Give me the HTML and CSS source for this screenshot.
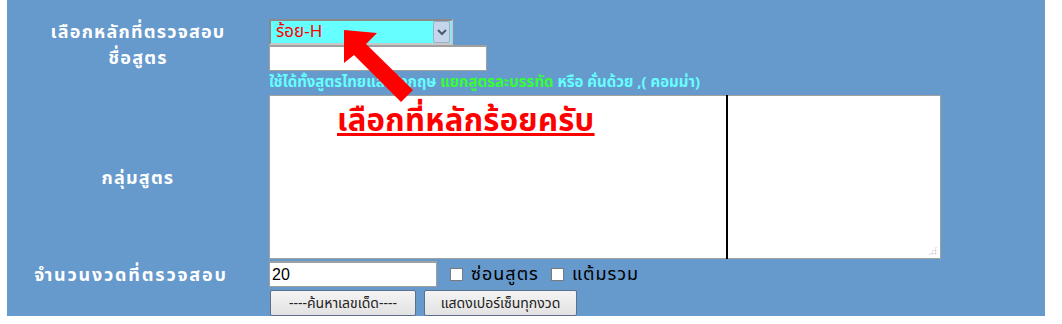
FILE: index.html
```html
<!DOCTYPE html>
<html lang="th">
<head>
<meta charset="utf-8">
<link rel="stylesheet" href="styles.css">
</head>
<body>
<div class="panel">
  <div class="form">
    <div class="label r1">เลือกหลักที่ตรวจสอบ</div>
    <div class="field r1">
      <div class="select"><span class="select-text">ร้อย-H</span><span class="select-btn"><svg width="12" height="8" viewBox="0 0 12 8"><path d="M2 2 L6 6 L10 2" fill="none" stroke="#4a5a70" stroke-width="2"/></svg></span></div>
    </div>
    <div class="label r2">ชื่อสูตร</div>
    <div class="field r2"><div class="input name"></div></div>
    <div class="field r3"><div class="hint">ใช้ได้ทั้งสูตรไทยและอังกฤษ <span class="green">แยกสูตรละบรรทัด</span> หรือ คั่นด้วย ,( คอมม่า)</div></div>
    <div class="label r4">กลุ่มสูตร</div>
    <div class="field r4"><div class="textarea"><span class="grip"></span></div></div>
    <div class="label r5 wide">จำนวนงวดที่ตรวจสอบ</div>
    <div class="field r5 inline">
      <div class="input count">20</div>
      <span class="check"></span><span class="check-label">ซ่อนสูตร</span>
      <span class="check"></span><span class="check-label">แต้มรวม</span>
    </div>
    <div class="field r6 inline buttons">
      <div class="btn b1">----ค้นหาเลขเด็ด----</div>
      <div class="btn b2">แสดงเปอร์เซ็นทุกงวด</div>
    </div>
  </div>
  <svg class="arrow" width="90" height="90" viewBox="0 0 90 90">
    <polygon points="7,0 40,3 29,14 76,60 64,72 17,25 7,33" fill="#ff0000"/>
  </svg>
  <div class="vline"></div>
  <div class="callout">เลือกที่หลักร้อยครับ</div>
</div>
</body>
</html>
```
FILE: styles.css
```css
html, body { margin: 0; padding: 0; background: #ffffff; }
body { font-family: Tahoma, "Noto Sans Thai", "Noto Sans", "DejaVu Sans", sans-serif; }
.panel {
  position: relative;
  margin-left: 7px;
  width: 1038px;
  height: 316px;
  background: #6699cc;
  box-sizing: border-box;
  padding-top: 19px;
}
.form {
  display: grid;
  grid-template-columns: 262px 1fr;
  grid-template-rows: 26px 26px 24px 166px 28px 27px;
}
.label {
  grid-column: 1;
  color: #ffffff;
  font-weight: bold;
  font-size: 18px;
  letter-spacing: 1.2px;
  display: flex;
  align-items: center;
  justify-content: center;
  white-space: nowrap;
}
.label.wide { letter-spacing: 1.8px; padding-right: 14px; }
.field { grid-column: 2; }
.r1 { grid-row: 1; }
.r2 { grid-row: 2; }
.r3 { grid-row: 3; }
.r4 { grid-row: 4; }
.r5 { grid-row: 5; }
.r6 { grid-row: 6; }
.label.r1 { align-items: flex-start; padding-top: 0px; }
.label.r2 { align-items: flex-start; padding-top: 0px; }
.select {
  width: 184px;
  height: 26px;
  box-sizing: border-box;
  border: 2px solid #8a8a8a;
  border-right-color: #c8c8c8;
  border-bottom-color: #c8c8c8;
  background: #66ffff;
  display: flex;
  align-items: center;
  justify-content: space-between;
}
.select-text { color: #ff0000; font-size: 17px; padding-left: 5px; }
.select-btn {
  width: 15px;
  height: 20px;
  margin-right: 1px;
  background: #c6d6ea;
  border: 1px solid #9aaec8;
  border-radius: 2px;
  display: flex;
  align-items: center;
  justify-content: center;
}
.input {
  box-sizing: border-box;
  background: #ffffff;
  border: 1px solid #a0a0a0;
  border-top: 2px solid #a0a0a0;
  height: 26px;
  font-family: Arial, "Liberation Sans", sans-serif;
  font-size: 16px;
  color: #000;
  padding-left: 2px;
  display: flex;
  align-items: center;
}
.input.name { width: 218px; }
.input.count { width: 168px; margin-right: 13px; }
.hint {
  color: #66ffff;
  font-weight: bold;
  font-size: 15px;
  white-space: nowrap;
}
.green { color: #33ff33; }
.textarea {
  position: relative;
  width: 672px;
  height: 164px;
  box-sizing: border-box;
  border: 1px solid #a0a0a0;
  background: #ffffff;
}
.grip {
  position: absolute;
  right: 3px;
  bottom: 3px;
  width: 9px;
  height: 9px;
  background:
    radial-gradient(circle, #d0d0d0 45%, transparent 50%) 0 0 / 3px 3px;
  clip-path: polygon(100% 0, 100% 100%, 0 100%);
}
.inline { display: flex; align-items: center; }
.r5.inline { align-items: center; height: 26px; }
.check {
  width: 11px;
  height: 11px;
  border: 1px solid #7a7a7a;
  background: #ffffff;
  margin-right: 8px;
}
.check-label {
  color: #000;
  font-size: 18px;
  letter-spacing: 1px;
  margin-right: 12px;
  white-space: nowrap;
}
.buttons { align-items: flex-start; padding-top: 1px; gap: 8px; }
.btn {
  box-sizing: border-box;
  height: 26px;
  border: 1px solid #5d6f8a;
  border-radius: 2px;
  background: linear-gradient(#f4f4f4, #e2e2e2);
  font-size: 14px;
  color: #222;
  display: flex;
  align-items: center;
  justify-content: center;
  white-space: nowrap;
}
.b1 { width: 146px; margin-left: 1px; }
.b2 { width: 153px; }
.arrow { position: absolute; left: 330px; top: 30px; }
.vline {
  position: absolute;
  left: 719px;
  top: 95px;
  width: 2px;
  height: 164px;
  background: #000;
}
.callout {
  position: absolute;
  left: 330px;
  top: 98px;
  color: #ff0000;
  font-weight: bold;
  font-size: 31px;
  letter-spacing: 0.3px;
  text-decoration: underline;
  text-decoration-thickness: 3px;
  text-underline-offset: 2px;
  white-space: nowrap;
}
```
